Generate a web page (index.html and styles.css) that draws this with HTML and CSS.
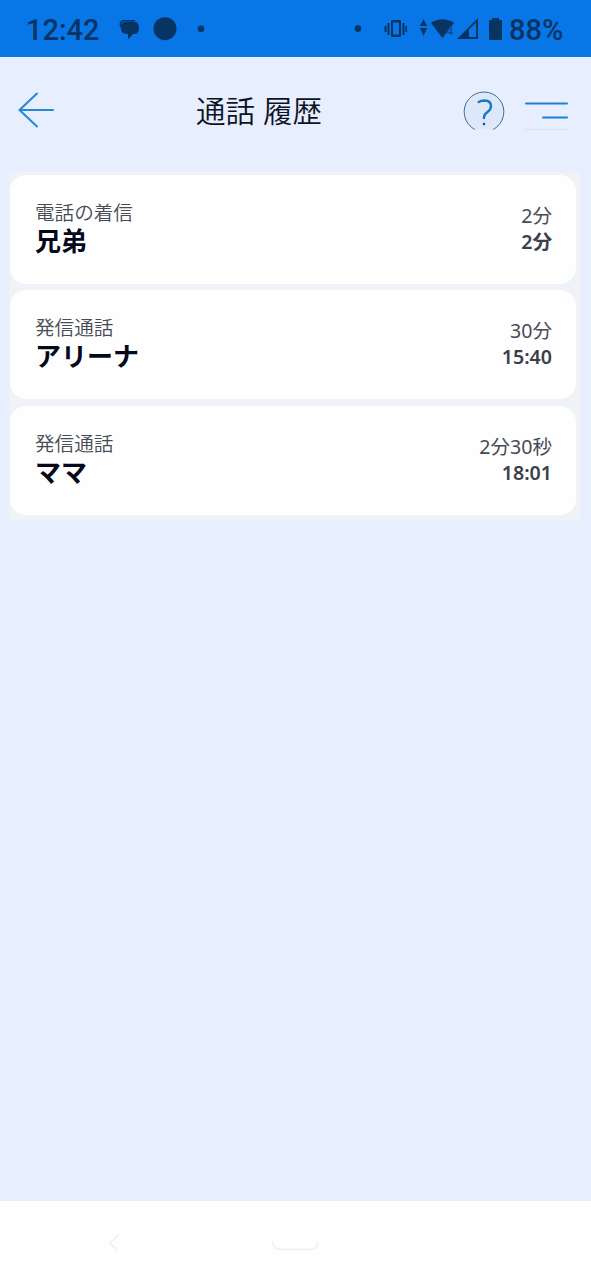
FILE: index.html
```html
<!DOCTYPE html>
<html lang="ja">
<head>
<meta charset="utf-8">
<title>通話 履歴</title>
<link rel="stylesheet" href="styles.css">
</head>
<body>
<div class="screen">
  <div class="status">
    <span class="clock">12:42</span>
    <svg class="status-left" width="90" height="30" viewBox="118 14 90 30">
      <path d="M123 20h12v1.300h-10q-3.500 0-3.500 3v4q-2-1-2-4t3.500-4.300z"/>
      <path d="M126 21.500h8q5 0 5 6.500t-5 6h-1l-5 5.500V34h-1q-6 0-6-6t5-6.500z"/>
      <circle cx="165" cy="28.700" r="11.500"/>
      <circle cx="201" cy="28.700" r="3.300"/>
    </svg>
    <svg class="status-right" width="153" height="30" viewBox="353 14 153 30">
      <circle cx="358" cy="28.600" r="3.300"/>
      <path d="M392 20h8q1 0 1 1v15q0 1-1 1h-8q-1 0-1-1V21q0-1 1-1zM393 22.500v12h6v-12zM387.500 23h2v12h-2zM384.500 26h2v6h-2zM402.500 23h2v12h-2zM405.500 26h1.500v6h-1.500z" fill-rule="evenodd"/>
      <path d="M423.500 19l3.500 7h-7zM420 28h7l-3.500 8z"/>
      <path d="M431 23q11.500-7.500 23 0l-11.500 15z"/>
      <text class="badge-four" x="446" y="34.500">4</text>
      <path d="M457 39l21-21v21zM469 29.500V37h7V22.500z" fill-rule="evenodd"/>
      <path d="M492 18h7v2.500h-7zM490 20h11q1 0 1 1v18q0 1-1 1h-11q-1 0-1-1V21q0-1 1-1z"/>
    </svg>
    <span class="battery">88%</span>
  </div>
  <header class="header">
    <svg width="38" height="38" viewBox="17 91 38 38"><path class="arrow" d="M37 93.500L19.500 110 37 126.500M20 110h33"/></svg>
    <h1 class="title">通話 履歴</h1>
    <svg width="108" height="42" viewBox="462 90 108 42">
      <path class="help-ring" d="M474.500 128.400A19.900 19.900 0 1 1 493.500 128.400"/>
      <path class="help-mark" d="M478.700 101Q481 99.500 484.500 99.500q6.500 .3 6.500 5.500 0 3.500-3.500 6-3.500 2.500-3.500 5.200v.8"/>
      <circle class="help-dot" cx="484" cy="123" r="1.300"/>
      <path class="menu-line" d="M526 102.500h41M543 116.500h24"/>
      <path class="menu-faint" d="M526 128.500h42"/>
    </svg>
  </header>
  <main class="list">
    <section class="card">
      <div class="who"><span class="kind">電話の着信</span><strong class="name">兄弟</strong></div>
      <div class="when"><span class="length">2分</span><b class="time">2分</b></div>
    </section>
    <section class="card">
      <div class="who"><span class="kind">発信通話</span><strong class="name">アリーナ</strong></div>
      <div class="when"><span class="length">30分</span><b class="time">15:40</b></div>
    </section>
    <section class="card">
      <div class="who"><span class="kind">発信通話</span><strong class="name">ママ</strong></div>
      <div class="when"><span class="length">2分30秒</span><b class="time">18:01</b></div>
    </section>
  </main>
  <footer class="nav">
    <svg width="591" height="79" viewBox="0 1201 591 79"><path d="M118.500 1235l-8.500 8 7 7.500M273 1242q0 7 7 7.500h31q7-.5 7-7.500"/></svg>
  </footer>
</div>
</body>
</html>
```
FILE: styles.css
```css
* { box-sizing: border-box; }
body { margin: 0; }
.screen {
  width: 591px;
  height: 1280px;
  display: flex;
  flex-direction: column;
  background: #e7eefe;
  font-family: "Noto Sans", "Noto Sans CJK JP", sans-serif;
}
.status {
  height: 57px;
  flex: none;
  display: flex;
  align-items: center;
  padding: 0 28px 0 26px;
  background: #0876e6;
  color: #073463;
  fill: #073463;
  font: 500 29px/34px Roboto, sans-serif;
}
.clock { width: 92px; padding-top: 3px; }
.status-right { margin-left: auto; }
.battery { width: 54px; margin-left: 3px; padding-top: 3px; }
.badge-four { font: 500 13px Roboto, sans-serif; fill: #0c4f91; }
.header {
  height: 115px;
  flex: none;
  display: flex;
  padding: 34px 21px 0 17px;
}
.header svg { flex: none; }
.title {
  flex: 1;
  margin: -1px 0 0 141px;
  color: #0d1326;
  font: 350 29.500px/38px "Noto Sans CJK JP", sans-serif;
  word-spacing: 1.500px;
}
svg path { stroke-linecap: round; }
.arrow { fill: none; stroke: #2587d5; stroke-width: 2; }
.help-ring { fill: #dde8fa; stroke: #426b93; stroke-width: 1; }
.help-mark { fill: none; stroke: #1978c5; stroke-width: 2.400; }
.help-dot { fill: #1d547f; }
.menu-line { stroke: #1c7fcf; stroke-width: 2; }
.menu-faint { stroke: #d3e2f5; }
.list {
  width: 571px;
  margin-left: 9px;
  padding: 3px 4px 5px 1px;
  display: flex;
  flex-direction: column;
  gap: 6.400px;
  background: #eff3f8;
}
.card {
  height: 109px;
  display: flex;
  justify-content: space-between;
  padding: 24px 24px 0 25px;
  border-radius: 16px;
  background: #fefefe;
}
.who, .when { display: flex; flex-direction: column; }
.when { align-items: flex-end; padding-top: 4px; color: #474b56; }
.kind { color: #474b56; font: 350 19.600px/26px "Noto Sans CJK JP", sans-serif; }
.name { margin-top: -1px; color: #05091a; font: 700 26px/32px "Noto Sans CJK JP", sans-serif; }
.length { font-size: 19.600px; line-height: 26px; font-weight: 380; }
.time { font-size: 19.600px; line-height: 26px; font-weight: 600; color: #3b3f4b; }
.nav { height: 79px; margin-top: auto; background: #fefefe; }
.nav svg { display: block; fill: none; stroke: #eee; stroke-width: 1.500; }
```
